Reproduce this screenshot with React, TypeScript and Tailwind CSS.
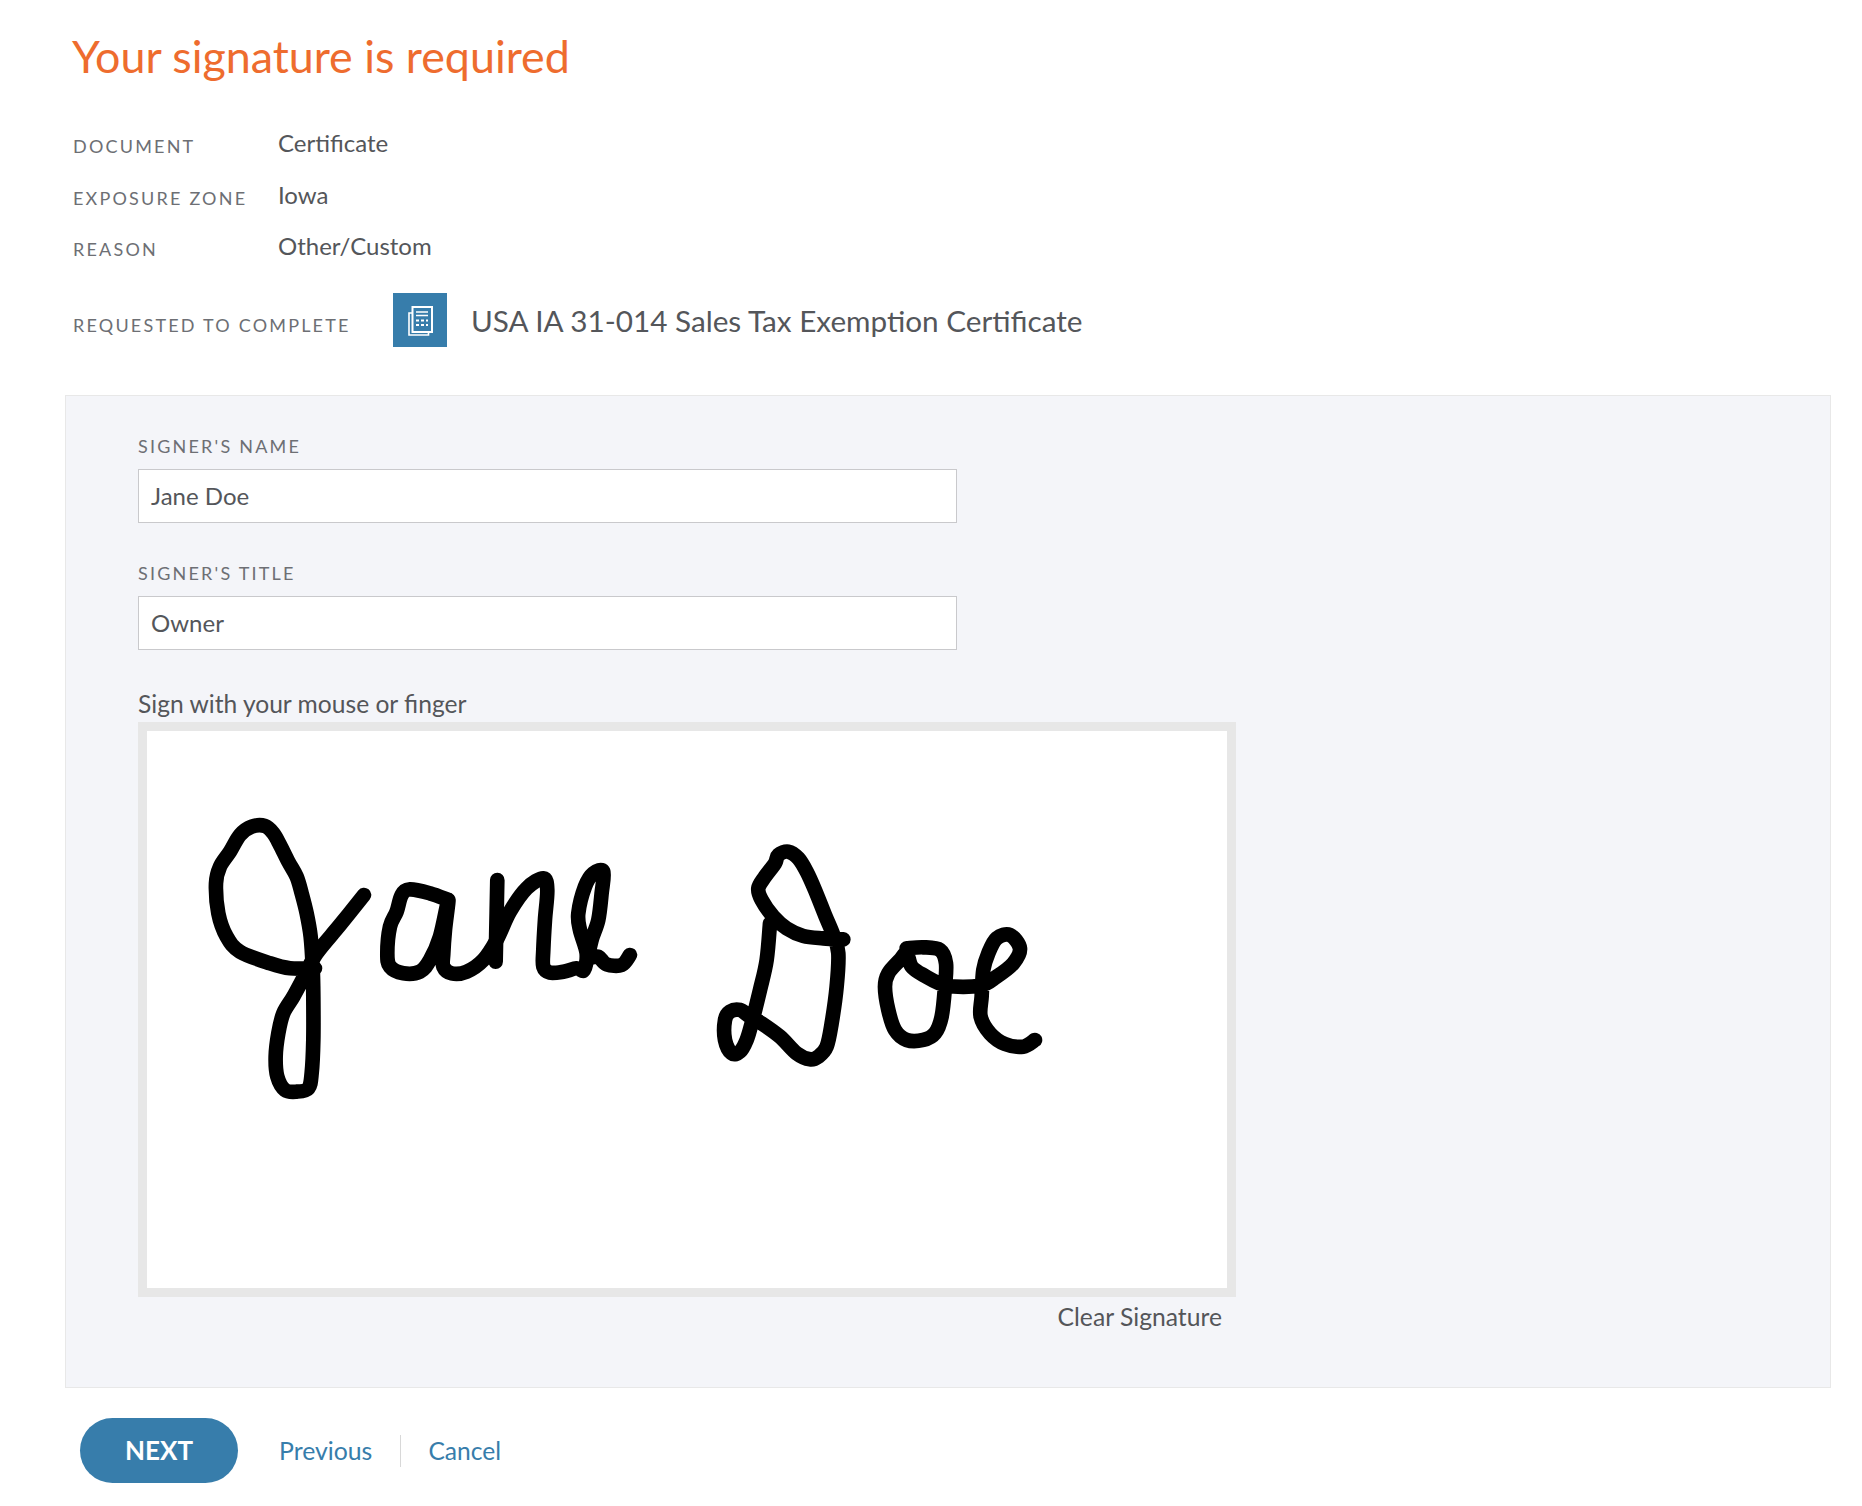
const font = "font-['Lato','Noto_Sans',sans-serif]"

// hand-traced centre lines of the signature, in 3x crop coordinates
const strokesJane = [
  [[375,565],[300,565],[240,550],[150,515],[110,470],[85,400],[78,310],[90,260],[120,215],[150,165],[185,140],[225,138],[250,160],[270,195],[295,245],[320,290],[335,340],[350,400],[362,470],[368,560],[370,650],[370,780],[365,880],[355,925],[320,935],[285,930],[262,890],[257,830],[265,760],[280,700],[310,650],[345,585],[380,520],[450,435],[522,345]],
  [[775,360],[720,340],[660,328],[635,345],[620,395],[600,440],[592,520],[600,560],[640,580],[690,575],[720,540],[750,470],[775,360],[765,450],[760,520],[760,560],[785,580],[830,575],[880,540],[920,480],[960,395],[1010,325],[1060,295],[1072,330],[1065,420],[1060,510],[1060,560],[1080,578],[1120,575],[1160,565],[1182,570],[1190,520],[1170,450],[1165,400],[1185,320],[1210,280],[1240,275],[1235,340],[1225,420],[1205,480],[1198,530],[1225,530],[1250,553],[1295,555],[1320,525]],
  [[922,300],[920,400],[917,545]],
]

const strokesDoe = [
  [[460,358],[400,355],[340,348],[290,325],[250,290],[215,240],[205,205],[225,170],[255,130],[265,105],[295,95],[325,115],[350,155],[375,210],[405,285],[430,345],[445,400],[440,500],[425,610],[410,680],[385,710],[360,718],[320,700],[270,650],[215,610],[180,590],[150,570],[120,575],[105,600],[105,660],[125,700],[150,695],[170,660],[185,610],[210,510],[230,420],[240,310]],
  [[650,385],[700,382],[750,390],[768,430],[765,500],[755,590],[735,640],[700,660],[650,660],[615,630],[595,570],[585,500],[595,460],[630,420],[650,400],[665,440],[700,465],[770,497],[870,497],[920,470],[970,430],[990,385],[960,345],[920,355],[895,400],[880,450],[875,530],[872,590],[900,640],[945,672],[1000,680],[1035,660]],
]

function smooth(pts: number[][]) {
  let d = `M${pts[0][0]} ${pts[0][1]}`
  for (let i = 0; i < pts.length - 1; i++) {
    const p0 = pts[Math.max(i - 1, 0)]
    const p1 = pts[i]
    const p2 = pts[i + 1]
    const p3 = pts[Math.min(i + 2, pts.length - 1)]
    const c1 = [p1[0] + (p2[0] - p0[0]) / 6, p1[1] + (p2[1] - p0[1]) / 6]
    const c2 = [p2[0] - (p3[0] - p1[0]) / 6, p2[1] - (p3[1] - p1[1]) / 6]
    d += `C${c1[0]} ${c1[1]} ${c2[0]} ${c2[1]} ${p2[0]} ${p2[1]}`
  }
  return d
}

function InfoRow({ label, value, className }: { label: string; value: string; className: string }) {
  return (
    <div className={`flex items-center ${className}`}>
      <span className="w-[205px] pt-[8px] text-[18px] leading-[24px] tracking-[2.2px] text-[#6d6f74]">{label}</span>
      <span className="pt-[2px] text-[24px] leading-[30px] text-[#54565a]">{value}</span>
    </div>
  )
}

function DocIcon() {
  return (
    <div className="flex h-[54px] w-[54px] items-center justify-center bg-[#377dab]">
      <svg width="54" height="54" viewBox="0 0 54 54" fill="none" stroke="#fff">
        <path d="M19.5 20H16v22h19.5v-3" strokeWidth="1.6" />
        <rect x="19.5" y="14" width="19.5" height="25" strokeWidth="2" />
        <path d="M23 19h12M23 22.5h12" strokeWidth="1.6" />
        <path d="M23 27.5h3M28 27.5h3M33 27.5h2M23 32h3M28 32h3M33 32h2" strokeWidth="2" />
      </svg>
    </div>
  )
}

function Field({ label, value, className }: { label: string; value: string; className: string }) {
  return (
    <div className={className}>
      <div className="text-[18px] leading-[24px] tracking-[2.2px] text-[#6d6f74]">{label}</div>
      <div className="mt-[11px] flex h-[54px] w-[819px] items-center border border-[#c9c9cc] bg-white pl-[12px] text-[24px] text-[#54565a]">
        {value}
      </div>
    </div>
  )
}

function Signature() {
  return (
    <svg className="block h-[557px] w-[1080px]" viewBox="147 731 1080 557" fill="none" stroke="#000" strokeLinecap="round" strokeLinejoin="round">
      <g transform="translate(190 780) scale(0.3333)" strokeWidth="44">
        {strokesJane.map((s, i) => <path key={i} d={smooth(s)} />)}
      </g>
      <g transform="translate(690 820) scale(0.3333)" strokeWidth="44">
        {strokesDoe.map((s, i) => <path key={i} d={smooth(s)} />)}
      </g>
    </svg>
  )
}

export default function App() {
  return (
    <div className={`h-[1506px] w-[1862px] bg-white ${font}`}>
      <h1 className="pl-[72px] pt-[26px] text-[44.8px] leading-[60px] text-[#ee6c2e]">Your signature is required</h1>
      <div className="pl-[73px] pt-[41px]">
        <InfoRow label="DOCUMENT" value="Certificate" className="h-[30px]" />
        <InfoRow label="EXPOSURE ZONE" value="Iowa" className="mt-[22px] h-[30px]" />
        <InfoRow label="REASON" value="Other/Custom" className="mt-[21px] h-[30px]" />
        <div className="mt-[33px] flex items-center">
          <span className="w-[320px] pt-[10px] text-[18px] leading-[24px] tracking-[2.2px] text-[#6d6f74]">REQUESTED TO COMPLETE</span>
          <DocIcon />
          <span className="ml-[24px] pt-[3px] text-[29.7px] text-[#54565a]">USA IA 31-014 Sales Tax Exemption Certificate</span>
        </div>
      </div>

      <div className="ml-[65px] mt-[48px] h-[993px] w-[1766px] border border-[#e8e8e8] bg-[#f4f5f9] pl-[72px] pt-[38px]">
        <Field label="SIGNER'S NAME" value="Jane Doe" className="" />
        <Field label="SIGNER'S TITLE" value="Owner" className="mt-[38px]" />
        <div className="mt-[38px] pb-[2px] text-[24.6px] leading-[32px] text-[#54565a]">Sign with your mouse or finger</div>
        <div className="w-[1098px] border-[9px] border-[#e7e7e7] bg-white">
          <Signature />
        </div>
        <div className="w-[1084px] pt-[4px] text-right text-[24.7px] leading-[32px] text-[#54565a]">Clear Signature</div>
      </div>

      <div className="flex items-center pl-[80px] pt-[30px]">
        <button className="h-[65px] w-[158px] rounded-full bg-[#377dab] text-[26px] font-bold text-white">NEXT</button>
        <a className="ml-[41px] text-[24.8px] leading-[32px] text-[#377dab]">Previous</a>
        <span className="ml-[28px] h-[32px] w-px bg-[#d8d8d8]" />
        <a className="ml-[27px] text-[24.6px] leading-[32px] text-[#377dab]">Cancel</a>
      </div>
    </div>
  )
}
